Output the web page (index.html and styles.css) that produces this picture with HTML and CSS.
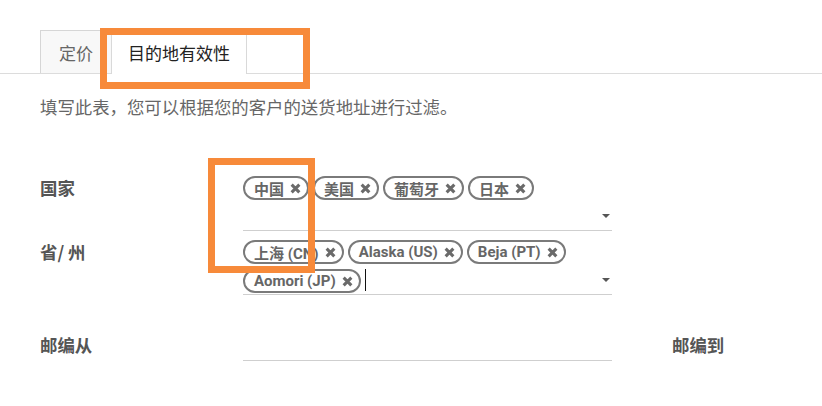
FILE: index.html
```html
<!DOCTYPE html>
<html lang="zh">
<head>
<meta charset="utf-8">
<title>目的地有效性</title>
<link rel="stylesheet" href="styles.css">
</head>
<body>
<div class="page">
  <div class="tabs">
    <div class="tab">定价</div>
    <div class="tab active">目的地有效性</div>
  </div>
  <div class="content">
    <p class="desc">填写此表，您可以根据您的客户的送货地址进行过滤。</p>
    <div class="form">
      <div class="label">国家</div>
      <div class="field">
        <span class="tag">中国<svg class="x" viewBox="0 0 10 10"><path d="M1.5 1.5L8.5 8.5M8.5 1.5L1.5 8.5"/></svg></span>
        <span class="tag">美国<svg class="x" viewBox="0 0 10 10"><path d="M1.5 1.5L8.5 8.5M8.5 1.5L1.5 8.5"/></svg></span>
        <span class="tag">葡萄牙<svg class="x" viewBox="0 0 10 10"><path d="M1.5 1.5L8.5 8.5M8.5 1.5L1.5 8.5"/></svg></span>
        <span class="tag">日本<svg class="x" viewBox="0 0 10 10"><path d="M1.5 1.5L8.5 8.5M8.5 1.5L1.5 8.5"/></svg></span>
        <span class="input"><span class="caret-space"></span><span class="arrow"></span></span>
      </div>
      <div class="spacer"></div>
      <div class="spacer"></div>

      <div class="label">省/ 州</div>
      <div class="field">
        <span class="tag">上海 (CN)<svg class="x" viewBox="0 0 10 10"><path d="M1.5 1.5L8.5 8.5M8.5 1.5L1.5 8.5"/></svg></span>
        <span class="tag">Alaska (US)<svg class="x" viewBox="0 0 10 10"><path d="M1.5 1.5L8.5 8.5M8.5 1.5L1.5 8.5"/></svg></span>
        <span class="tag">Beja (PT)<svg class="x" viewBox="0 0 10 10"><path d="M1.5 1.5L8.5 8.5M8.5 1.5L1.5 8.5"/></svg></span>
        <span class="tag">Aomori (JP)<svg class="x" viewBox="0 0 10 10"><path d="M1.5 1.5L8.5 8.5M8.5 1.5L1.5 8.5"/></svg></span>
        <span class="input"><span class="cursor"></span><span class="arrow"></span></span>
      </div>
      <div class="spacer"></div>
      <div class="spacer"></div>

      <div class="label zip">邮编从</div>
      <div class="field plain"></div>
      <div class="spacer"></div>
      <div class="label zip">邮编到</div>
    </div>
  </div>
  <div class="mark mark-tab"></div>
  <div class="mark mark-tags"></div>
</div>
</body>
</html>
```

FILE: styles.css
```css
html, body {
  margin: 0;
  padding: 0;
  background: #fff;
}

body {
  font-family: "Noto Sans CJK SC", "Noto Sans", sans-serif;
  width: 822px;
  height: 406px;
  overflow: hidden;
}

.page {
  position: relative;
  height: 406px;
}

.tabs {
  display: flex;
  align-items: flex-end;
  padding: 30px 0 0 40px;
  border-bottom: 1px solid #dcdcdc;
  height: 74px;
  box-sizing: border-box;
}

.tab {
  box-sizing: border-box;
  height: 43px;
  padding: 3px 18px 0;
  font-size: 17px;
  line-height: 38px;
  color: #666;
  background: #f8f8f8;
  border: 1px solid #d6d6d6;
  border-bottom: none;
  margin-bottom: 0;
}

.tab.active {
  padding: 3px 16px 0;
  height: 44px;
  margin-left: -1px;
  margin-bottom: -1px;
  color: #222;
  background: #fff;
  border-color: #d9d9d9;
}

.content {
  padding: 0 40px;
}

.desc {
  margin: 21px 0 0;
  font-size: 17.4px;
  line-height: 24px;
  color: #666;
}

.form {
  display: grid;
  grid-template-columns: 203px 369px 60px auto;
  row-gap: 7px;
  margin-top: 55px;
}

.label {
  font-size: 17.4px;
  font-weight: 700;
  line-height: 24px;
  padding-top: 2px;
  color: #555;
  white-space: nowrap;
}

.label.zip {
  margin-top: 31px;
  padding-top: 0;
}

.field {
  display: flex;
  flex-wrap: wrap;
  align-items: center;
  gap: 4px;
  padding: 2px 0 0;
  border-bottom: 1px solid #cfcfcf;
  min-height: 24px;
}

.field.plain {
  margin-top: 31px;
  height: 28px;
  box-sizing: border-box;
}

.tag {
  display: inline-flex;
  align-items: center;
  box-sizing: border-box;
  height: 24px;
  padding: 0 6px 0 9px;
  border: 2px solid #7a7a7a;
  border-radius: 12px;
  font-family: Roboto, "Noto Sans CJK SC", sans-serif;
  font-size: 15px;
  font-weight: 700;
  color: #666;
  white-space: nowrap;
}

.x {
  width: 11px;
  height: 11px;
  margin-left: 6px;
  fill: none;
  stroke: #6a6a6a;
  stroke-width: 2.8;
}

.input {
  flex: 1 1 100px;
  min-width: 100px;
  height: 24px;
  display: flex;
  align-items: center;
  justify-content: space-between;
  padding-bottom: 2px;
}

.cursor {
  width: 1px;
  height: 22px;
  background: #111;
}

.arrow {
  width: 0;
  height: 0;
  margin-right: 2px;
  border-left: 4px solid transparent;
  border-right: 4px solid transparent;
  border-top: 4px solid #555;
}

.mark {
  position: absolute;
  box-sizing: border-box;
  border: 7px solid #f78a3a;
}

.mark-tab {
  left: 100px;
  top: 28px;
  width: 210px;
  height: 61px;
}

.mark-tags {
  left: 208px;
  top: 158px;
  width: 107px;
  height: 115px;
}
```
